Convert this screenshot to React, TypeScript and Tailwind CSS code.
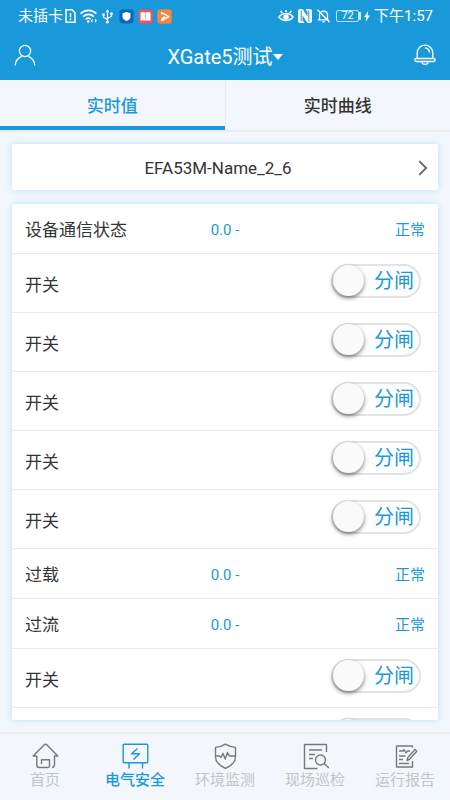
import { useState } from "react";
import type { ReactNode } from "react";

type Item = { name: string; kind: "value" | "switch" };

const items: Item[] = [
  { name: "设备通信状态", kind: "value" },
  { name: "开关", kind: "switch" },
  { name: "开关", kind: "switch" },
  { name: "开关", kind: "switch" },
  { name: "开关", kind: "switch" },
  { name: "开关", kind: "switch" },
  { name: "过载", kind: "value" },
  { name: "过流", kind: "value" },
  { name: "开关", kind: "switch" },
  { name: "开关", kind: "switch" },
];

function StatusBar() {
  return (
    <div className="flex h-8 items-center justify-between pl-[18px] pr-[17px] text-[15px] leading-5">
      <div className="flex items-center">
        <span>未插卡</span>
        <svg className="ml-[2px] h-[14px] w-[11px]" viewBox="0 0 11 14" fill="none" stroke="white" strokeWidth="1.5">
          <path d="M1 .8h6l3 3v9.4H1zM5.5 4.2v4M5.5 9.6v1.6" />
        </svg>
        <svg className="ml-1 h-[14px] w-[17px]" viewBox="0 0 17 14" fill="none" stroke="white" strokeWidth="1.7">
          <path d="M.6 4.6C5.1.2 11.9.2 16.4 4.600M3.200 7.600c3.100-3 7.500-3 10.600 0M5.700 10.300c1.700-1.500 3.500-1.500 4.800 0" />
          <circle cx="8.200" cy="12.500" r="1.300" fill="white" stroke="none" />
          <path d="m10.800 12 1.700-2.500v4.200zM16.800 11.500 15 14V9.500z" fill="white" stroke="none" />
        </svg>
        <svg className="ml-[5px] h-[15px] w-[11px]" viewBox="0 0 11 15" fill="none" stroke="white" strokeWidth="1.2">
          <path d="M5.5 2v10.5M1.5 6v2.2l4 2.6M9.5 5v2.2l-4 2.4" />
          <path d="M3.6 3.200 5.5.2 7.400 3.200zM.3 4.400h2.400v2.300H.3zM8.300 3.600h2.400v2.300H8.300z" fill="white" stroke="none" />
          <circle cx="5.5" cy="13" r="1.6" fill="white" stroke="none" />
        </svg>
        <svg className="ml-[6px] h-[15px] w-[15px]" viewBox="0 0 15 15">
          <rect x=".5" y=".5" width="14" height="14" rx="3" fill="#0868ba" />
          <path d="M7.5 3 11.5 4.2v3.2c0 2-1.5 3.6-4 4.6-2.500-1-4-2.600-4-4.600V4.200z" fill="white" />
        </svg>
        <svg className="ml-1 h-[15px] w-[15px]" viewBox="0 0 15 15">
          <rect x=".5" y=".5" width="14" height="14" rx="3" fill="#f4525d" />
          <path d="M2.500 3.600c1.500-.8 3.500-.7 4.800 0v8.200c-1.300-.5-3.200-.5-4.800 0zM7.700 3.600c1.300-.7 3.200-.8 4.800 0v8.200c-1.500-.5-3.400-.5-4.800 0z" fill="white" />
        </svg>
        <svg className="ml-1 h-[15px] w-[15px]" viewBox="0 0 15 15">
          <rect x=".3" y=".3" width="14.4" height="14.4" rx="3" fill="#f5843c" />
          <path d="M4.800 5.400V3.600l7 4-7 4V10l3.500-2.300" fill="none" stroke="white" strokeWidth="1.500" strokeLinejoin="round" />
        </svg>
      </div>
      <div className="flex items-center">
        <svg className="h-[14px] w-[16px]" viewBox="0 0 16 14" fill="none" stroke="white" strokeWidth="1.500">
          <path d="M1 8c3.500-4.600 10.500-4.600 14 0-3.500 4.600-10.500 4.600-14 0zM8 1v2M2.600 2 4.300 4M13.400 2 11.700 4" />
          <circle cx="8" cy="8" r="2.800" fill="white" stroke="none" />
        </svg>
        <svg className="ml-1 h-[14px] w-[14px]" viewBox="0 0 14 14">
          <path d="M2 0h2.500l5 7.500V3L7.500 0H12a2 2 0 0 1 2 2v10a2 2 0 0 1-2 2H9.500l-5-7.500V11l2 3H2a2 2 0 0 1-2-2V2a2 2 0 0 1 2-2z" fill="white" />
          <path d="M3.200 1.500v11M10.800 1.500v11" stroke="#1a99da" strokeWidth="1" />
        </svg>
        <svg className="ml-[5px] h-[14px] w-[13px]" viewBox="0 0 13 14" fill="none" stroke="white" strokeWidth="1.300">
          <path d="M2.500 10.500V6c0-5 8-5 8 0v4.500M.8 10.800h11M5.300 12.800h2.400M.5.8l12 12.400" />
        </svg>
        <span className="ml-[6px] flex h-3 w-[23px] items-center justify-center rounded-[2px] border border-white/70 text-[11px] leading-3">72</span>
        <span className="h-2 w-[2px] bg-white/80" />
        <svg className="ml-[3px] h-[11px] w-[6px]" viewBox="0 0 6 11" fill="white">
          <path d="M4.200 0 0 6.200h2.400L1.600 11 6 4.600H3.500z" />
        </svg>
        <span className="ml-1">下午1:57</span>
      </div>
    </div>
  );
}

function TitleBar() {
  return (
    <div className="flex h-12 items-center justify-between px-[14px]">
      <button type="button" aria-label="用户">
        <svg className="h-6 w-[22px]" viewBox="0 0 22 24" fill="none" stroke="white" strokeWidth="1.300">
          <circle cx="11" cy="7" r="5.600" />
          <path d="M1.200 21.500c.2-4.600 2.800-7.600 6.400-9.200M20.800 21.500c-.2-4.600-2.800-7.600-6.400-9.200" />
        </svg>
      </button>
      <button type="button" className="flex items-center pt-px text-xl leading-7">
        XGate5测试
        <svg className="h-[6px] w-[10px]" viewBox="0 0 10 6" fill="white">
          <path d="M0 0h10L5 6z" />
        </svg>
      </button>
      <button type="button" aria-label="通知">
        <svg className="h-6 w-[22px]" viewBox="0 0 22 24" fill="none" stroke="white" strokeWidth="1.300">
          <path d="M3.200 14.500V9c0-10.400 15.600-10.400 15.600 0v5.500M11 4c2.600.2 4.300 2 4.500 4.500" />
          <rect x=".8" y="14.500" width="20.400" height="3" rx="1.500" />
          <path d="M7.800 17.700c.3 3.600 6.100 3.600 6.400 0" />
        </svg>
      </button>
    </div>
  );
}

function Switch({ id }: { id: string }) {
  const [on, setOn] = useState(false);
  return (
    <label className="relative mb-[5px] flex h-[34px] w-[90px] items-center rounded-full border-2 border-[#e3e3e3] bg-white">
      <input
        id={id}
        type="checkbox"
        role="switch"
        checked={on}
        onChange={() => setOn(!on)}
        className="peer sr-only"
      />
      <span className="h-[31px] w-[31px] shrink-0 rounded-full bg-[#fafafa] shadow-[0_2px_4px_rgba(0,0,0,0.5)] peer-checked:order-last" />
      <span className="flex-1 pl-[5px] text-center text-xl leading-7 text-[#1a99da]">{on ? "合闸" : "分闸"}</span>
    </label>
  );
}

function Row({ item, index }: { item: Item; index: number }) {
  if (item.kind === "switch") {
    const id = `switch-${index}`;
    return (
      <li className="flex h-[59px] shrink-0 items-center justify-between border-b border-[#e9e9e9] pl-[13px] pr-[17px]">
        <label htmlFor={id} className="pt-[3px]">{item.name}</label>
        <Switch id={id} />
      </li>
    );
  }
  return (
    <li className="grid h-[50px] shrink-0 grid-cols-[1fr_auto_1fr] items-center border-b border-[#e9e9e9] px-[13px] pt-[2px]">
      <span>{item.name}</span>
      <span className="text-[15px] text-[#1a99da]">0.0 -</span>
      <span className="text-right text-[15px] text-[#1a99da]">正常</span>
    </li>
  );
}

const navItems: { label: string; icon: ReactNode }[] = [
  {
    label: "首页",
    icon: <path d="M4.800 13H1.200L12 1.900c1-.9 2-.9 3 0L25.800 13h-3.300v8.500c0 1.700-.8 2.700-2.500 3.300M4.800 13v9c0 1.700 1 2.500 2.500 2.500h8.500c1.200 0 1.700-.6 1.700-1.700v-6H9.500v4.500" />,
  },
  {
    label: "电气安全",
    icon: (
      <>
        <rect x="1.200" y="1.200" width="24.600" height="18.600" rx="1" />
        <path d="M7 20v5.500M20.500 20v5.500M15.500 5.500 9.500 10.700h8L11.500 16.500" />
      </>
    ),
  },
  {
    label: "环境监测",
    icon: (
      <path d="M13.500 1.200c3 2 6.500 3 10 3.200v9c0 5.500-4.500 9.500-10 12-5.500-2.500-10-6.500-10-12v-9c3.500-.2 7-1.200 10-3.200zM3.500 13h4l1.500 1.500 2-4 2.200 5.500 2.300-6.500 2 3.500h6" />
    ),
  },
  {
    label: "现场巡检",
    icon: (
      <>
        <path d="M24.500 9V1.500H2.500V25.500h13M7 7h13M7 11.500h6M7 15.500h4" />
        <circle cx="18.500" cy="17" r="5" />
        <path d="m22 20.500 5 4.500" />
      </>
    ),
  },
  {
    label: "运行报告",
    icon: (
      <>
        <path d="M20.500 4.500V3H4.500v21H20.500v-6M7 8h4l1-1.500 2 3.500 1.500-2H18M7 13h6.500M7 16.500h4M7 20.500h10" />
        <path d="m15 17.500.8-3L23 6.500l1.800 1.800-7.300 8z" />
      </>
    ),
  },
];

function BottomNav() {
  return (
    <nav className="grid h-[68px] shrink-0 grid-cols-5 border-t-2 border-[#e9ebec] pt-[9px]">
      {navItems.map((n, i) => (
        <a
          key={n.label}
          href="#"
          className={`flex flex-col items-center text-[15px] leading-5 ${i === 1 ? "font-medium text-[#1a99da]" : "text-[#c3c4c6]"}`}
        >
          <svg
            className={`h-[27px] w-[27px] ${i === 1 ? "text-[#1a99da]" : "text-[#77797c]"}`}
            viewBox="0 0 27 27"
            fill="none"
            stroke="currentColor"
            strokeWidth="1.400"
            strokeLinejoin="round"
          >
            {n.icon}
          </svg>
          {n.label}
        </a>
      ))}
    </nav>
  );
}

export default function App() {
  return (
    <div className="flex h-screen flex-col bg-[#f3f7fb] font-[Roboto,'Noto_Sans_CJK_SC',sans-serif] text-[#333]">
      <header className="bg-[#1a99da] text-white">
        <StatusBar />
        <TitleBar />
      </header>
      <div role="tablist" className="flex h-[52px] shrink-0 border-b-2 border-[#ebebeb] text-[17px] font-medium leading-6">
        <button type="button" role="tab" aria-selected="true" className="flex-1 border-b-4 border-[#1a99da] pt-[6px] text-[#1a99da]">
          实时值
        </button>
        <button type="button" role="tab" aria-selected="false" className="flex-1 border-l border-[#e9ebec] pt-[2px]">
          实时曲线
        </button>
      </div>
      <main className="flex min-h-0 flex-1 flex-col gap-[14px] p-3 text-[17px] leading-6">
        <button
          type="button"
          className="flex h-[46px] shrink-0 items-center rounded-[2px] bg-white px-[10px] pt-[2px] shadow-[0_0_7px_#b4e2f8]"
        >
          <span className="flex-1 pr-1 text-center">EFA53M-Name_2_6</span>
          <svg className="h-4 w-[10px]" viewBox="0 0 10 16" fill="none" stroke="#666" strokeWidth="1.800">
            <path d="m1.200 1.200 7 6.800-7 6.800" />
          </svg>
        </button>
        <ul className="flex min-h-0 flex-1 flex-col overflow-y-auto rounded-[2px] bg-white shadow-[0_0_7px_#b4e2f8] [scrollbar-width:none]">
          {items.map((item, i) => (
            <Row key={i} item={item} index={i} />
          ))}
        </ul>
      </main>
      <BottomNav />
    </div>
  );
}
